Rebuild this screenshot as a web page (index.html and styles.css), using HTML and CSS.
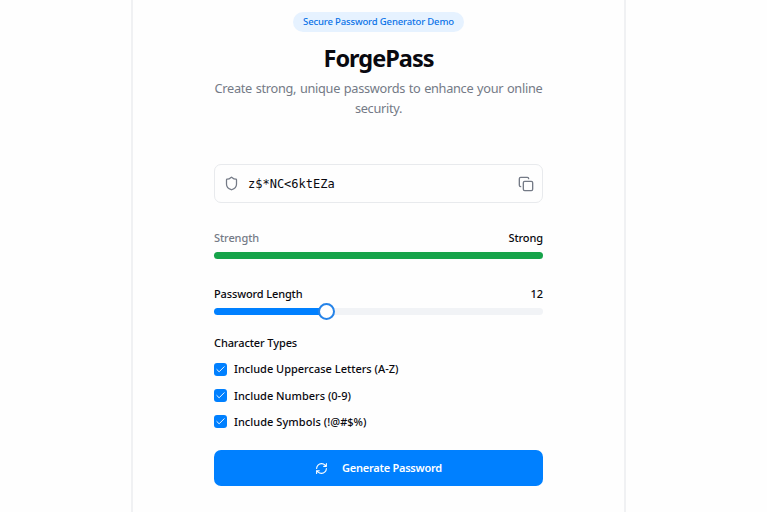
FILE: index.html
```html
<!DOCTYPE html>
<html lang="en">
<head>
<meta charset="utf-8">
<title>ForgePass</title>
<link rel="stylesheet" href="styles.css">
</head>
<body>
<main class="panel">
  <header class="intro">
    <span class="badge"><span>Secure Password Generator Demo</span></span>
    <h1 class="title"><span>ForgePass</span></h1>
    <p class="subtitle"><span>Create strong, unique passwords to enhance your online</span><br>security.</p>
  </header>
  <div class="password">
    <svg class="icon shield" viewBox="0 0 24 24"><path d="M20 13c0 5-3.500 7.500-7.660 8.950a1 1 0 0 1-.67-.01C7.500 20.500 4 18 4 13V6a1 1 0 0 1 1-1c2 0 4.500-1.200 6.240-2.720a1.170 1.170 0 0 1 1.520 0C14.510 3.810 17 5 19 5a1 1 0 0 1 1 1z"/></svg>
    <code class="value">z$*NC&lt;6ktEZa</code>
    <svg class="icon copy" viewBox="0 0 24 24"><rect x="8" y="8" width="14" height="14" rx="2"/><path d="M4 16c-1.100 0-2-.9-2-2V4c0-1.100.9-2 2-2h10c1.100 0 2 .9 2 2"/></svg>
  </div>
  <section class="strength">
    <div class="row"><span class="muted">Strength</span><span class="level">Strong</span></div>
    <div class="meter"></div>
  </section>
  <section class="length">
    <div class="row"><span class="length-label">Password Length</span><span>12</span></div>
    <div class="slider"><div class="fill"></div><div class="thumb"></div><div class="rest"></div></div>
  </section>
  <section class="types">
    <h2 class="heading"><span>Character Types</span></h2>
    <div class="option"><span class="check"><svg class="icon" viewBox="0 0 24 24"><path d="M20 6 9 17l-5-5"/></svg></span><span class="upper">Include Uppercase Letters (A-Z)</span></div>
    <div class="option"><span class="check"><svg class="icon" viewBox="0 0 24 24"><path d="M20 6 9 17l-5-5"/></svg></span><span class="numbers">Include Numbers (0-9)</span></div>
    <div class="option"><span class="check"><svg class="icon" viewBox="0 0 24 24"><path d="M20 6 9 17l-5-5"/></svg></span><span class="symbols">Include Symbols (!@#$%)</span></div>
  </section>
  <button class="generate"><svg class="icon" viewBox="0 0 24 24"><path d="M3 12a9 9 0 0 1 9-9 9.750 9.750 0 0 1 6.740 2.740L21 8M21 3v5h-5M21 12a9 9 0 0 1-9 9 9.750 9.750 0 0 1-6.740-2.740L3 16M8 16H3v5"/></svg><span>Generate Password</span></button>
</main>
</body>
</html>
```
FILE: styles.css
```css
* { box-sizing: border-box; }
body {
  margin: 0;
  height: 512px;
  overflow: hidden;
  background: #fefefe;
  color: #09090f;
  font: 500 11px/16px "Noto Sans", "Open Sans", sans-serif;
}
.panel {
  width: 495px;
  height: 512px;
  margin-left: 131px;
  padding: 12px 81px 0 81px;
  border: solid #f0f1f3;
  border-width: 0 2px;
}
.icon { fill: none; stroke: currentColor; stroke-width: 2; stroke-linecap: round; stroke-linejoin: round; }
.intro { display: flex; flex-direction: column; align-items: center; height: 152px; }
.badge {
  width: 171px;
  height: 20px;
  border-radius: 10px;
  background: #e6f2ff;
  color: #0b72e8;
  font-size: 9.5px;
  line-height: 20px;
  letter-spacing: -0.15px;
  text-align: center;
  white-space: nowrap;
}
.title { margin: 11px 0 0; font-size: 23.5px; line-height: 30px; font-weight: 700; letter-spacing: -1px; }
.subtitle { margin: 5px 0 0; font-size: 12.75px; line-height: 20px; font-weight: 400; letter-spacing: -0.3px; word-spacing: 0.7px; color: #747a86; text-align: center; white-space: nowrap; }
.password {
  display: flex;
  align-items: center;
  height: 39px;
  padding: 0 8px 0 9px;
  border: 1px solid #e8eaed;
  border-radius: 7px;
}
.password .icon { width: 16px; height: 16px; color: #747a86; }
.password .shield { width: 15px; height: 15px; }
.value { flex: 1; margin-left: 9px; font: 12px/16px "DejaVu Sans Mono", monospace; }
.row { display: flex; justify-content: space-between; white-space: nowrap; }
.muted { color: #747a86; letter-spacing: -0.1px; }
.level { letter-spacing: -0.1px; }
.length-label { letter-spacing: -0.13px; }
.strength { margin-top: 27px; }
.meter { height: 7px; margin-top: 6px; border-radius: 4px; background: #16a34a; }
.length { margin-top: 27px; }
.slider { display: flex; align-items: center; height: 17px; margin-top: 1px; }
.fill { width: 105px; height: 7px; border-radius: 4px 0 0 4px; background: #0080ff; }
.thumb { z-index: 1; width: 17px; height: 17px; margin: 0 -1px; border: 2px solid #2583e8; border-radius: 50%; background: #fff; }
.rest { flex: 1; height: 7px; border-radius: 0 4px 4px 0; background: #f1f3f6; }
.types { margin-top: 15px; }
.heading { margin: 0 0 5px; font: inherit; letter-spacing: -0.1px; }
.option { display: flex; align-items: center; gap: 7px; height: 26.4px; white-space: nowrap; }
.symbols { letter-spacing: 0.04px; }
.check { display: flex; align-items: center; justify-content: center; width: 13px; height: 13px; border-radius: 3px; background: #0080ff; color: #fff; }
.check .icon { width: 11px; height: 11px; }
.generate {
  display: flex;
  align-items: center;
  justify-content: center;
  gap: 14px;
  width: 100%;
  height: 36px;
  margin-top: 15px;
  padding: 0;
  border: 0;
  border-radius: 7px;
  background: #0080ff;
  color: #fff;
  font: 600 11px/16px "Noto Sans", sans-serif;
  letter-spacing: -0.25px;
}
.generate .icon { width: 13px; height: 13px; }
```
